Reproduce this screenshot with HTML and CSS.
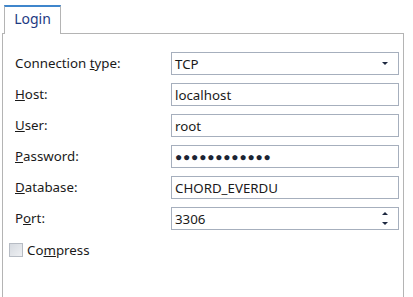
FILE: index.html
```html
<!doctype html>
<html>
<head>
<meta charset="UTF-8">
<title>Login</title>
<link rel="stylesheet" href="styles.css">
</head>
<body>
	<div class="tabs">
		<div class="tab">Login</div>
	</div>
	<div class="panel">
		<div class="form">
			<label class="label">Connection <u>t</u>ype:</label>
			<div class="field select">
				<span class="value">TCP</span>
				<span class="arrow-down"></span>
			</div>

			<label class="label"><u>H</u>ost:</label>
			<div class="field"><span class="value">localhost</span></div>

			<label class="label"><u>U</u>ser:</label>
			<div class="field"><span class="value">root</span></div>

			<label class="label"><u>P</u>assword:</label>
			<div class="field"><span class="value dots">&#9679;&#9679;&#9679;&#9679;&#9679;&#9679;&#9679;&#9679;&#9679;&#9679;&#9679;&#9679;</span></div>

			<label class="label"><u>D</u>atabase:</label>
			<div class="field"><span class="value">CHORD_EVERDU</span></div>

			<label class="label">P<u>o</u>rt:</label>
			<div class="field spin">
				<span class="value">3306</span>
				<span class="spin-buttons">
					<span class="arrow-up"></span>
					<span class="arrow-down"></span>
				</span>
			</div>
		</div>
		<div class="check">
			<span class="box"></span>
			<span>Co<u>m</u>press</span>
		</div>
	</div>
</body>
</html>
```

FILE: styles.css
```css
body {
	margin:0;
	background:#fff;
	font-family:"Noto Sans", "Open Sans", sans-serif;
	font-size:13.3px;
	color:#1a1a1a;
	overflow:hidden;
	}

.tabs {
	display:flex;
	padding:5px 0 0 4px;
	}

.tab {
	position:relative;
	z-index:1;
	width:55px;
	height:27px;
	margin-bottom:-1px;
	border:1px solid #b4b4b4;
	border-top:2px solid #3f86cc;
	border-bottom:none;
	background:#fff;
	color:#1d3a82;
	font-size:14px;
	line-height:24px;
	text-align:center;
	}

.panel {
	width:402px;
	height:264px;
	margin-left:2px;
	padding-top:18px;
	box-sizing:border-box;
	border:1px solid #b4b4b4;
	border-bottom:none;
	}

.form {
	display:grid;
	grid-template-columns:156px 228px;
	grid-auto-rows:23px;
	row-gap:8px;
	padding-left:12px;
	}

.label {
	display:block;
	line-height:23px;
	}

.field {
	display:flex;
	align-items:center;
	box-sizing:border-box;
	border:1px solid #a6afbd;
	padding:0 3px;
	}

.value {
	flex:1;
	}

.dots {
	font-size:12px;
	letter-spacing:0.8px;
	color:#1c2433;
	}

.arrow-down, .arrow-up {
	display:block;
	width:0;
	height:0;
	border-left:3px solid transparent;
	border-right:3px solid transparent;
	}

.arrow-down {
	border-top:3px solid #1d2840;
	}

.arrow-up {
	border-bottom:3px solid #1d2840;
	}

.select .arrow-down {
	margin-right:7px;
	}

.spin-buttons {
	display:flex;
	flex-direction:column;
	justify-content:space-between;
	height:13px;
	margin-right:7px;
	}

.check {
	display:flex;
	align-items:center;
	gap:4px;
	margin:11px 0 0 6px;
	}

.box {
	width:12px;
	height:12px;
	border:1px solid #b7bcc4;
	background:linear-gradient(135deg, #d6dae0, #eef0f3);
	}
```
